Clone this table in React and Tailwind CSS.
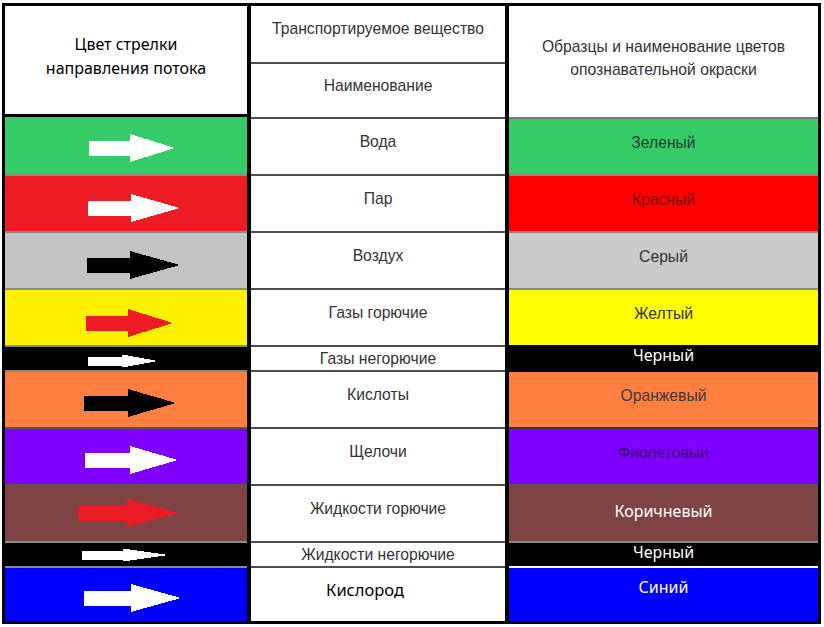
// Таблица опознавательной окраски трубопроводов
const rows = [
  { h: "h-[57px]", hh: 57, left: "bg-[#33cc66]", line: "", arrow: "#ffffff", a: [84, 125, 170, 31], mid: "Вода", right: "bg-[#33cc66] border-t-2 border-[#7a7a7a]", name: "Зеленый", nameCls: "text-[#2b3b2f] pt-[15px]" },
  { h: "h-[57px]", hh: 57, left: "bg-[#ed1c24]", line: "border-t-2 border-[#8a8a8a]", arrow: "#ffffff", a: [83, 126, 175, 34], mid: "Пар", right: "bg-[#ff0000] border-t-2 border-[#8a8a8a]", name: "Красный", nameCls: "text-[#7a0d0d] pt-[15px]" },
  { h: "h-[57px]", hh: 57, left: "bg-[#c3c3c3]", line: "border-t-2 border-[#8a8a8a]", arrow: "#000000", a: [82, 125, 175, 34], mid: "Воздух", right: "bg-[#cbcbcb] border-t-2 border-[#8a8a8a]", name: "Серый", nameCls: "text-[#333333] pt-[15px]" },
  { h: "h-[57px]", hh: 57, left: "bg-[#fff200]", line: "border-t-2 border-[#8a8a8a]", arrow: "#ed1c24", a: [81, 123, 168, 35], mid: "Газы горючие", right: "bg-[#ffff00] border-t-2 border-[#8a8a8a]", name: "Желтый", nameCls: "text-[#333333] pt-[15px]" },
  { h: "h-[25px]", hh: 25, thin: true, left: "bg-black", line: "border-t-2 border-[#8a8a8a]", arrow: "#ffffff", a: [83, 117, 153, 16], mid: "Газы негорючие", midPad: "pt-[4px]", right: "bg-black border-t-0", name: "Черный", nameCls: "text-white font-['Noto_Sans',sans-serif] text-[16px] pt-[1px]" },
  { h: "h-[57px]", hh: 57, left: "bg-[#ff7f40]", line: "border-t-2 border-[#8a8a8a]", arrow: "#000000", a: [79, 123, 171, 33], mid: "Кислоты", right: "bg-[#ff7f40] border-t-2 border-black", name: "Оранжевый", nameCls: "text-[#3a3a3a] pt-[15px]" },
  { h: "h-[57px]", hh: 57, left: "bg-[#8000ff]", line: "border-t-2 border-[#555555]", arrow: "#ffffff", a: [80, 125, 173, 33], mid: "Щелочи", right: "bg-[#8000ff] border-t-2 border-[#333333]", name: "Фиолетовый", nameCls: "text-[#3f0a73] pt-[15px]" },
  { h: "h-[57px]", hh: 57, left: "bg-[#804343]", line: "border-t-2 border-[#555555]", arrow: "#ed1c24", a: [73, 122, 174, 29], mid: "Жидкости горючие", right: "bg-[#804343] border-t-2 border-[#555555]", name: "Коричневый", nameCls: "text-white font-['Noto_Sans',sans-serif] text-[16px] pt-[16px]" },
  { h: "h-[25px]", hh: 25, thin: true, left: "bg-black", line: "border-t-2 border-[#8a8a8a]", arrow: "#ffffff", a: [77, 118, 163, 14], mid: "Жидкости негорючие", midPad: "pt-[4px]", right: "bg-black border-t-2 border-[#8a8a8a]", name: "Черный", nameCls: "text-white font-['Noto_Sans',sans-serif] text-[16px] pt-[0px]" },
  { h: "h-[55px]", hh: 55, left: "bg-[#0000ff]", line: "border-t-2 border-[#8a8a8a]", arrow: "#ffffff", a: [79, 126, 176, 32], mid: "Кислород", big: true, right: "bg-[#0000ff] border-t-2 border-white", name: "Синий", nameCls: "text-white font-['Noto_Sans',sans-serif] text-[16px] pt-[10px]" },
];

function Arrow({ row }) {
  const [x0, xs, tip, cyRaw] = row.a;
  const off = row.line ? 2 : 0;
  const cy = cyRaw - off;
  const sh = row.thin ? 4.5 : 7.5;
  const hh = row.thin ? 6.5 : 14;
  const pts = [
    [x0, cy - sh],
    [xs, cy - sh],
    [xs, cy - hh],
    [tip, cy],
    [xs, cy + hh],
    [xs, cy + sh],
    [x0, cy + sh],
  ]
    .map((p) => p.join(","))
    .join(" ");
  return (
    <svg width="242" height={row.hh - off} className="block" shapeRendering="crispEdges">
      <polygon points={pts} fill={row.arrow} />
    </svg>
  );
}

export default function App() {
  return (
    <div className="w-[824px] h-[627px] bg-white pt-[3px] pl-[2px]">
      <div className="grid w-fit grid-cols-[242px_254px_309px] gap-x-[4px] bg-black border-[3px] border-black">
        {/* шапка */}
        <div className="h-[111px] bg-white border-b-[3px] border-black flex items-center justify-center pb-[8px] text-center text-[16px] leading-[24px] text-black font-['Noto_Sans',sans-serif]">
          <div>
            Цвет стрелки
            <br />
            направления потока
          </div>
        </div>
        <div className="h-[111px] bg-white flex flex-col text-center text-[15.7px] leading-[16px] text-[#333333] font-['Liberation_Sans',sans-serif]">
          <div className="h-[56px] pt-[15px]">Транспортируемое вещество</div>
          <div className="h-[55px] pt-[14px] border-t-2 border-[#4d4d4d]">Наименование</div>
        </div>
        <div className="h-[111px] bg-white flex items-center justify-center pb-[7px] text-center text-[15.7px] leading-[23px] text-[#333333] font-['Liberation_Sans',sans-serif]">
          <div>
            Образцы и наименование цветов
            <br />
            опознавательной окраски
          </div>
        </div>

        {rows.map((r, i) => [
          <div key={"l" + i} className={`${r.h} ${r.left} ${r.line} overflow-hidden`}>
            <Arrow row={r} />
          </div>,
          <div
            key={"m" + i}
            className={`${r.h} bg-white border-t-2 border-[#4d4d4d] text-center ${
              r.big
                ? "pt-[12px] pr-[26px] text-[16.5px] leading-[20px] text-black font-['Noto_Sans',sans-serif]"
                : `${r.midPad || "pt-[15px]"} text-[15.7px] leading-[16px] text-[#333333] font-['Liberation_Sans',sans-serif]`
            }`}
          >
            {r.mid}
          </div>,
          <div
            key={"r" + i}
            className={`${r.h} ${r.right} text-center text-[15.7px] leading-[18px] font-['Liberation_Sans',sans-serif] ${r.nameCls}`}
          >
            {r.name}
          </div>,
        ])}
      </div>
    </div>
  );
}
